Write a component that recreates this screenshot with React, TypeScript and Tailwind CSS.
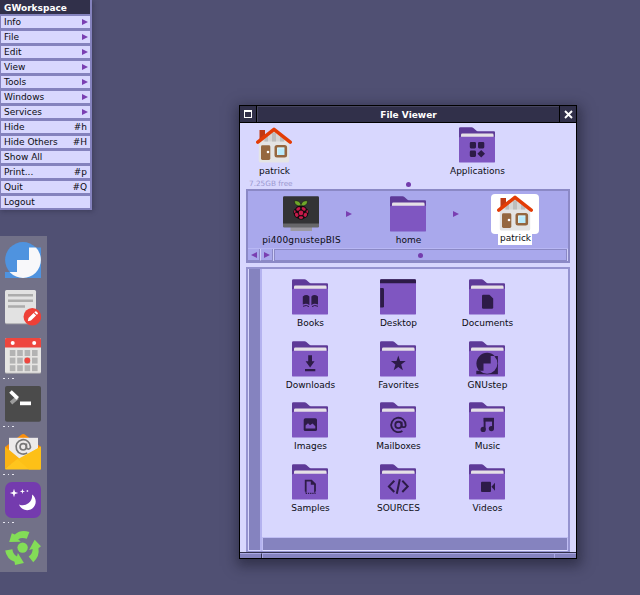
import type { ReactNode } from "react";

const INK = "#2d1b47";

const STAIR = "M24 5.5H36V36H0V30H12V18H24Z";

function Svg({ children, size = 36 }: { children: ReactNode; size?: number }) {
  return (
    <svg width={size} height={size} viewBox="0 0 36 36" className="block shrink-0">
      {children}
    </svg>
  );
}

function Folder({ children }: { children?: ReactNode }) {
  return (
    <Svg>
      <path d="M0 1.5Q0 .2 1.4 .2H12.5Q13.6 .2 14.4 1L17.2 3.6Q17.8 4.2 18.8 4.2H35Q36 4.2 36 5.2V14H0Z" fill="#5e3a98" />
      <path d="M2 11V8Q2 6.6 3.4 6.6H33.2Q34.6 6.6 34.6 8V11Z" fill="#e5e0e6" />
      <path d="M0 11Q.2 9.8 1.5 9.8H36V34.4Q36 35.6 34.8 35.6H1.2Q0 35.6 0 34.4Z" fill="#7f56c1" />
      {children}
    </Svg>
  );
}

function House() {
  return (
    <Svg>
      <path d="M3.5 3H9V12L3.5 15Z" fill="#bf3a14" />
      <path d="M18 3.5L33.2 15V34Q33.2 35.4 32 35.4H4Q2.8 35.4 2.8 34V15Z" fill="#e4e4e4" />
      <path d="M18 4L29 12.5V14.5H7V12.5Z" fill="#d6d6d6" />
      <path d="M8.5 11.5L12 9V14.5H8.5ZM16 5.5H20V14.5H16ZM24 9L28 12V14.5H24Z" fill="#bdbdbd" />
      <path d="M1.8 15.2L18 2.3L34.2 15.2" fill="none" stroke="#e33c06" strokeWidth="3.5" strokeLinecap="round" strokeLinejoin="round" />
      <rect x="5" y="18.3" width="9.3" height="14.7" rx="1.4" fill="#95673f" />
      <circle cx="12" cy="25" r="1.3" fill="#fff" />
      <rect x="19.8" y="19.3" width="10" height="10" rx="1.2" fill="#b9ebfb" stroke="#95673f" strokeWidth="2.6" />
      <path d="M21.5 28V21H28.2" fill="none" stroke="#e8f9ff" strokeWidth=".7" />
    </Svg>
  );
}

function PiComputer() {
  return (
    <Svg>
      <rect x="7.5" y="30" width="21.5" height="5" fill="#9b99a0" />
      <rect x="0" y="20" width="36" height="11.5" rx="1.2" fill="#67676a" />
      <path d="M0 1.4Q0 .2 1.2 .2H34.8Q36 .2 36 1.4V27.5H0Z" fill="#333335" />
      <path d="M17.8 10Q11.8 10.5 11.2 4.8Q16.8 4 18 8.8Q19.2 4 24.8 4.8Q24.2 10.5 18.2 10Z" fill="#6fa72a" stroke="#151515" strokeWidth=".6" />
      <path d="M18 9.5Q22 9.5 23.5 12.5Q26.5 14.5 25.3 18Q24.5 21.7 21 22.4Q18 24.8 15 22.4Q11.5 21.7 10.7 18Q9.5 14.5 12.5 12.5Q14 9.5 18 9.5Z" fill="#100b0d" />
      <g fill="#c51a4a">
        <circle cx="18" cy="16.9" r="2.3" />
        <ellipse cx="15.3" cy="12.9" rx="2.2" ry="1.5" transform="rotate(-30 15.3 12.9)" />
        <ellipse cx="20.7" cy="12.9" rx="2.2" ry="1.5" transform="rotate(30 20.7 12.9)" />
        <ellipse cx="13.7" cy="18.8" rx="1.7" ry="2.1" transform="rotate(-30 13.7 18.8)" />
        <ellipse cx="22.3" cy="18.8" rx="1.7" ry="2.1" transform="rotate(30 22.3 18.8)" />
        <ellipse cx="18" cy="21.6" rx="2.2" ry="1.3" />
        <ellipse cx="11.8" cy="15.5" rx=".8" ry="1.6" />
        <ellipse cx="24.2" cy="15.5" rx=".8" ry="1.6" />
      </g>
    </Svg>
  );
}

function AtMark({ x, y, scale, color, weight }: { x: number; y: number; scale: number; color: string; weight: number }) {
  return (
    <g transform={`translate(${x} ${y}) scale(${scale})`} fill="none" stroke={color} strokeWidth={weight}>
      <circle cx="12" cy="12" r="4.4" />
      <path d="M16.4 7.4V13a2.9 2.9 0 0 0 5.6 0v-1a10 10 0 1 0-4.5 8.4" />
    </g>
  );
}

const files: { name: string; icon: ReactNode }[] = [
  {
    name: "Books",
    icon: (
      <Folder>
        <path d="M10.8 17.4Q14.5 14.8 17.4 17.4V26.2Q14.5 23.6 10.8 25.6ZM19.4 17.4Q22.3 14.8 26 17.4V25.6Q22.3 23.6 19.4 26.2Z" fill={INK} />
        <path d="M11 27.3Q14.5 25.5 17 27.6M20 27.6Q22.5 25.5 26 27.3" fill="none" stroke={INK} strokeWidth="1" />
      </Folder>
    ),
  },
  {
    name: "Desktop",
    icon: (
      <Svg>
        <rect x="0" y=".2" width="36" height="35.4" rx="1.2" fill="#7f56c1" />
        <path d="M0 4.2V1.6Q0 .2 1.4 .2H34.6Q36 .2 36 1.6V4.2Z" fill={INK} />
        <path d="M.2 9H2.6Q4 9 4 10.4V27.2Q4 28.6 2.6 28.6H.2Z" fill={INK} />
      </Svg>
    ),
  },
  {
    name: "Documents",
    icon: (
      <Folder>
        <path d="M14.3 15.8H20.4L24.2 19.6V28.4Q24.2 29.7 22.9 29.7H14.3Q13 29.7 13 28.4V17.1Q13 15.8 14.3 15.8Z" fill={INK} />
      </Folder>
    ),
  },
  {
    name: "Downloads",
    icon: (
      <Folder>
        <path d="M16.2 14.2H20V20.2H22.6L18.1 26.6L13.6 20.2H16.2ZM13 28H23.3V30.2H13Z" fill={INK} />
      </Folder>
    ),
  },
  {
    name: "Favorites",
    icon: (
      <Folder>
        <path d="M18.3 14.6L20.1 20H25.7L21.2 23.5L22.9 29.3L18.3 25.9L13.7 29.3L15.4 23.5L10.9 20H16.5Z" fill={INK} />
      </Folder>
    ),
  },
  {
    name: "GNUstep",
    icon: (
      <Folder>
        <g transform="translate(7.3 11.7) scale(.6)">
          <path d={STAIR} fill={INK} />
          <circle cx="18" cy="18" r="17.8" fill={INK} />
          <clipPath id="gnustep-folder">
            <circle cx="18" cy="18" r="17.2" />
          </clipPath>
          <path d={STAIR} fill="#7f56c1" clipPath="url(#gnustep-folder)" />
        </g>
      </Folder>
    ),
  },
  {
    name: "Images",
    icon: (
      <Folder>
        <rect x="11.7" y="16.3" width="13.3" height="12.7" rx="1.6" fill={INK} />
        <path d="M13.6 26.4V23.6L16 21.2L18 23.2L20.5 21.6L23.3 24.2V26.4Z" fill="#7f56c1" />
      </Folder>
    ),
  },
  {
    name: "Mailboxes",
    icon: (
      <Folder>
        <AtMark x={9.8} y={14.3} scale={0.72} color={INK} weight={2.5} />
      </Folder>
    ),
  },
  {
    name: "Music",
    icon: (
      <Folder>
        <path d="M15.6 27.5V17H24V26.4" fill="none" stroke={INK} strokeWidth="1.9" />
        <path d="M14.7 15.8H24.9V19.6H14.7Z" fill={INK} />
        <circle cx="14.2" cy="27.4" r="2.6" fill={INK} />
        <circle cx="22.4" cy="26.6" r="2.6" fill={INK} />
      </Folder>
    ),
  },
  {
    name: "Samples",
    icon: (
      <Folder>
        <path d="M13.7 27.5V16.6H19.4L23 20.2V27.5" fill="none" stroke={INK} strokeWidth="1.8" />
        <path d="M18.8 16V20.8H23.6" fill={INK} />
        <path d="M13.7 29.4H23.6M13.2 27.8H14.8M22 27.8H23.8" fill="none" stroke={INK} strokeWidth="1.2" strokeDasharray="1.3 .9" />
      </Folder>
    ),
  },
  {
    name: "SOURCES",
    icon: (
      <Folder>
        <path d="M14.3 16.8L8.9 22.4L14.3 28M22.3 16.8L27.7 22.4L22.3 28M19.8 15.2L16.8 29.8" fill="none" stroke={INK} strokeWidth="2" />
      </Folder>
    ),
  },
  {
    name: "Videos",
    icon: (
      <Folder>
        <rect x="12" y="17.7" width="10" height="10.2" rx="1" fill={INK} />
        <path d="M22.4 22.8L26 18.8V26.8Z" fill={INK} />
      </Folder>
    ),
  },
];

const menu: [string, string][] = [
  ["Info", ">"],
  ["File", ">"],
  ["Edit", ">"],
  ["View", ">"],
  ["Tools", ">"],
  ["Windows", ">"],
  ["Services", ">"],
  ["Hide", "#h"],
  ["Hide Others", "#H"],
  ["Show All", ""],
  ["Print...", "#p"],
  ["Quit", "#Q"],
  ["Logout", ""],
];

function Arrow({ left = false }: { left?: boolean }) {
  return (
    <svg width="6" height="6" viewBox="0 0 6 6" className="block shrink-0">
      <path d={left ? "M6 0V6L0 3Z" : "M0 0V6L6 3Z"} fill="#7a3fb2" />
    </svg>
  );
}

function Menu() {
  return (
    <div className="absolute left-0 top-0 w-[92px] border-r-2 border-[#8482bd] bg-[#8482bd] pb-[2px] shadow-[1px_1px_5px_rgba(20,20,40,0.35)]">
      <div className="flex h-[14px] items-center bg-[#31304a] pl-[4px] pt-[1px] font-bold text-white">GWorkspace</div>
      <div className="flex flex-col gap-[3px] pl-[1px] pt-[2px]">
        {menu.map(([label, key]) => (
          <div key={label} className="flex h-[12px] items-center justify-between bg-[#d8d7fe] px-[3px]">
            <span>{label}</span>
            {key === ">" ? <div className="-mr-[1px]"><Arrow /></div> : <span>{key}</span>}
          </div>
        ))}
      </div>
    </div>
  );
}

const dockIcons: ReactNode[] = [
  <Svg key="gnustep">
    <path d={STAIR} fill="#4f93df" />
    <circle cx="18" cy="18" r="17.9" fill="#4f93df" />
    <clipPath id="gnustep-dock">
      <circle cx="18" cy="18" r="17.9" />
    </clipPath>
    <path d={STAIR} fill="#f8f8fa" clipPath="url(#gnustep-dock)" />
  </Svg>,
  <Svg key="notes">
    <rect x="0" y=".8" width="31" height="33.5" rx="1.5" fill="#a9a8ad" />
    <rect x="0" y="0" width="31" height="33.2" rx="1.5" fill="#e2e2e2" />
    <path d="M3 5.3H28M3 10.8H28M3 16.5H20" stroke="#acacac" strokeWidth="2.4" />
    <circle cx="27.3" cy="26.8" r="8.8" fill="#ee4037" />
    <path d="M22.8 31.2L23.5 28L28.6 23L31.1 25.5L26 30.5ZM29.3 22.3L30.2 21.4Q30.8 20.9 31.4 21.4L32.7 22.7Q33.2 23.3 32.7 23.9L31.8 24.8Z" fill="#fff" />
  </Svg>,
  <Svg key="calendar">
    <rect x="0" y="1" width="36" height="34.8" rx="1.5" fill="#aaa9ac" />
    <rect x="0" y="0" width="36" height="34.8" rx="1.5" fill="#e6e5e3" />
    <path d="M0 9.6V1.5Q0 0 1.5 0H34.5Q36 0 36 1.5V9.6Z" fill="#ee463e" />
    <circle cx="7.7" cy="5" r="2" fill="#fff" />
    <circle cx="29.2" cy="5" r="2" fill="#fff" />
    {[12, 19.6, 27.2].map((y) =>
      [4.8, 12.2, 19.6, 27].map((x) => <rect key={`${x}-${y}`} x={x} y={y} width="5.6" height="6" fill="#b3b3b3" />)
    )}
    <circle cx="22.3" cy="22.5" r="2.9" fill="#ee463e" />
  </Svg>,
  <Svg key="terminal">
    <rect x="0" y="0" width="36" height="35.8" rx="2" fill="#4b4b4b" />
    <path d="M6 17L12.5 11.5" stroke="#9c9c9c" strokeWidth="3.7" />
    <path d="M5.5 5.5L12.7 12.4" stroke="#fff" strokeWidth="3.7" />
    <rect x="15" y="15.5" width="11" height="3.7" fill="#fff" />
  </Svg>,
  <Svg key="mail">
    <path d="M0 13L16 1Q18.3-1 20.5 1L36 13V30H0Z" fill="#f98f0c" />
    <path d="M4 3.8H33V27H4Z" fill="#eceaea" />
    <AtMark x={9.6} y={4.2} scale={0.72} color="#777" weight={2.3} />
    <path d="M0 12.5L14.5 24.5L0 34.5ZM36 12.5L16 24.5V34.5H36Z" fill="#fbb413" />
    <path d="M0 34.5L13 24.6L36 34.5Q36 35.6 35 35.6H1Q0 35.6 0 34.5Z" fill="#ffc51d" />
    <path d="M12.5 25.2L36 12.5V34.5Q36 35.6 35 35.6H24Z" fill="#fdc017" />
  </Svg>,
  <Svg key="night">
    <rect x="0" y="0" width="36" height="36" rx="7" fill="#743bae" />
    <path d="M27 12.5A8.6 8.6 0 1 1 14 22.4A9.4 9.4 0 0 0 27 12.5Z" fill="#fff" />
    <path d="M9 6.8L10 9.9L13.2 11L10 12L9 15.3L8 12L4.8 11L8 9.9ZM17.4 6.8L18 8.8L20 9.4L18 10L17.4 12L16.8 10L14.8 9.4L16.8 8.8Z" fill="#fff" />
    <circle cx="22.4" cy="9" r=".9" fill="#e5d8f5" />
  </Svg>,
  <Svg key="recycle">
    <circle cx="17.6" cy="17.6" r="5.2" fill="#83dd57" />
    {[0, 120, 240].map((turn) => (
      <path key={turn} transform={`rotate(${turn} 17.6 18.2)`} d="M24.4 2Q16-.9 9.8 4.4L6.8 3.2L4.2 12L15.8 11.7L13.2 9.2Q17 6.8 21.8 8.8Z" fill="#83dd57" />
    ))}
  </Svg>,
];

function Dock() {
  return (
    <div className="absolute left-0 top-[236px] flex w-[47px] flex-col bg-[#727188]">
      {dockIcons.map((icon, i) => (
        <div key={i} className="relative flex h-[48px] pl-[5px] pt-[6px]">
          {icon}
          {i > 1 && i < 6 && (
            <div className="absolute bottom-[1px] left-[3px] flex gap-[3px]">
              <i className="size-[1.5px] bg-[#e8e8f2]" />
              <i className="size-[1.5px] bg-[#e8e8f2]" />
              <i className="size-[1.5px] bg-[#e8e8f2]" />
            </div>
          )}
        </div>
      ))}
    </div>
  );
}

function Item({ label, children }: { label: string; children: ReactNode }) {
  return (
    <div className="flex w-[88px] flex-col items-center">
      {children}
      <span className="mt-[2px] h-[12px] whitespace-nowrap pl-[1px] leading-[12px]">{label}</span>
    </div>
  );
}

function TitleBar() {
  return (
    <div className="flex h-[17px] shrink-0 items-stretch border-b border-black bg-[#31304a] text-white">
      <div className="flex w-[17px] items-center justify-center border-r border-black">
        <div className="size-[8px] border border-t-[2px] border-white" />
      </div>
      <div className="flex flex-1 items-center justify-center border-l border-t border-[#46455f] font-bold">File Viewer</div>
      <div className="flex w-[17px] items-center justify-center border-l border-black">
        <svg width="9" height="9" viewBox="0 0 9 9">
          <path d="M1 1L8 8M8 1L1 8" stroke="#fff" strokeWidth="1.9" />
        </svg>
      </div>
    </div>
  );
}

function PathPane() {
  return (
    <div className="ml-[6px] flex h-[74px] w-[324px] shrink-0 flex-col border-2 border-[#8b89c6] bg-[#a9a8ec]">
      <div className="flex h-[57px] pl-[9px] pt-[5px]">
        <div className="-mb-px tracking-[0.13px]">
          <Item label="pi400gnustepBIS">
            <PiComputer />
          </Item>
        </div>
        <div className="w-[19px] pl-[1px] pt-[15px]"><Arrow /></div>
        <Item label="home">
          <Folder />
        </Item>
        <div className="w-[19px] pl-[1px] pt-[15px]"><Arrow /></div>
        <div className="-mt-[2px] flex w-[88px] flex-col items-center">
          <div className="flex h-[40px] w-[48px] justify-center rounded-[4px] bg-white pt-[1px]">
            <House />
          </div>
          <span className="-mt-[1px] h-[12px] bg-white pl-[2px] pr-[1px] leading-[11px]">patrick</span>
        </div>
      </div>
      <div className="flex h-[13px] border-t border-[#b8b7f4]">
        <div className="flex w-[12px] items-center justify-center border-b border-r border-[#8b89c6]"><Arrow left /></div>
        <div className="flex w-[13px] items-center justify-center border-b border-l border-r border-b-[#8b89c6] border-l-[#d0cff9] border-r-[#8b89c6]"><Arrow /></div>
        <div className="ml-[1px] flex flex-1 items-center justify-center border border-[#8b89c6] shadow-[-1px_0_#d0cff9]">
          <div className="size-[5px] rounded-full bg-[#743cad]" />
        </div>
        <div className="w-[1px] bg-[#d0cff9]" />
      </div>
    </div>
  );
}

function FilePane() {
  return (
    <div className="ml-[6px] mt-[4px] flex h-[285px] w-[324px] shrink-0 border-2 border-b-[1px] border-[#9593d0]">
      <div className="w-[14px] border-x border-b border-r-2 border-[#d8d7fe] border-r-[#b4b2ef] bg-[#8583bf]" />
      <div className="flex flex-1 flex-col">
        <div className="grid h-[268px] grid-cols-[88px_89px_88px] auto-rows-[61.6px] content-start pl-[4px] pt-[10px]">
          {files.map((file) => (
            <Item key={file.name} label={file.name}>{file.icon}</Item>
          ))}
        </div>
        <div className="flex-1 border border-[#c0bef4] border-b-[#e2e1ff] bg-[#8583bf]" />
      </div>
    </div>
  );
}

function FileViewer() {
  return (
    <div className="absolute left-[239px] top-[105px] flex h-[454px] w-[338px] flex-col border border-black bg-[#d8d7fe] shadow-[1px_4px_12px_3px_rgba(20,20,35,0.5)]">
      <TitleBar />
      <div className="flex h-[66px] shrink-0 flex-col">
        <div className="flex justify-between pr-[55px] pt-[4px]">
          <div className="-ml-[10px]">
            <Item label="patrick"><House /></Item>
          </div>
          <Item label="Applications"><Folder><path d="M12 15H15.7Q17 15 17 16.3V20Q17 21.4 15.7 21.4H12Q10.8 21.4 10.8 20V16.3Q10.8 15 12 15ZM20.3 15H24Q25.3 15 25.3 16.3V20Q25.3 21.4 24 21.4H20.3Q19 21.4 19 20V16.3Q19 15 20.3 15ZM12 23.6H15.7Q17 23.6 17 25V28.6Q17 30 15.7 30H12Q10.8 30 10.8 28.6V25Q10.8 23.6 12 23.6ZM22.2 23L26 26.8L22.2 30.6L18.4 26.8Z" fill={INK} /></Folder></Item>
        </div>
        <div className="flex h-[12px] pl-[9px] text-[7.3px] leading-[13px] text-[#9a97d0]">
          <span className="w-[157px]">7.25GB free</span>
          <div className="mt-[5px] size-[5px] rounded-full bg-[#743cad]" />
        </div>
      </div>
      <PathPane />
      <FilePane />
      <div className="mt-auto flex h-[6px] border-t border-[#31304a] bg-[#8583bf]">
        <div className="w-[22px] border-r border-t border-[#aaa8e5] border-r-[#31304a]" />
        <div className="flex-1 border-l border-t border-[#aaa8e5]" />
        <div className="w-[22px] border-l border-t border-[#aaa8e5]" />
      </div>
    </div>
  );
}

export default function App() {
  return (
    <div className="relative h-[595px] w-[640px] overflow-hidden bg-[#505073] font-['DejaVu_Sans',sans-serif] text-[9px] leading-[12px] text-[#0c0c12]">
      <Menu />
      <Dock />
      <FileViewer />
    </div>
  );
}
